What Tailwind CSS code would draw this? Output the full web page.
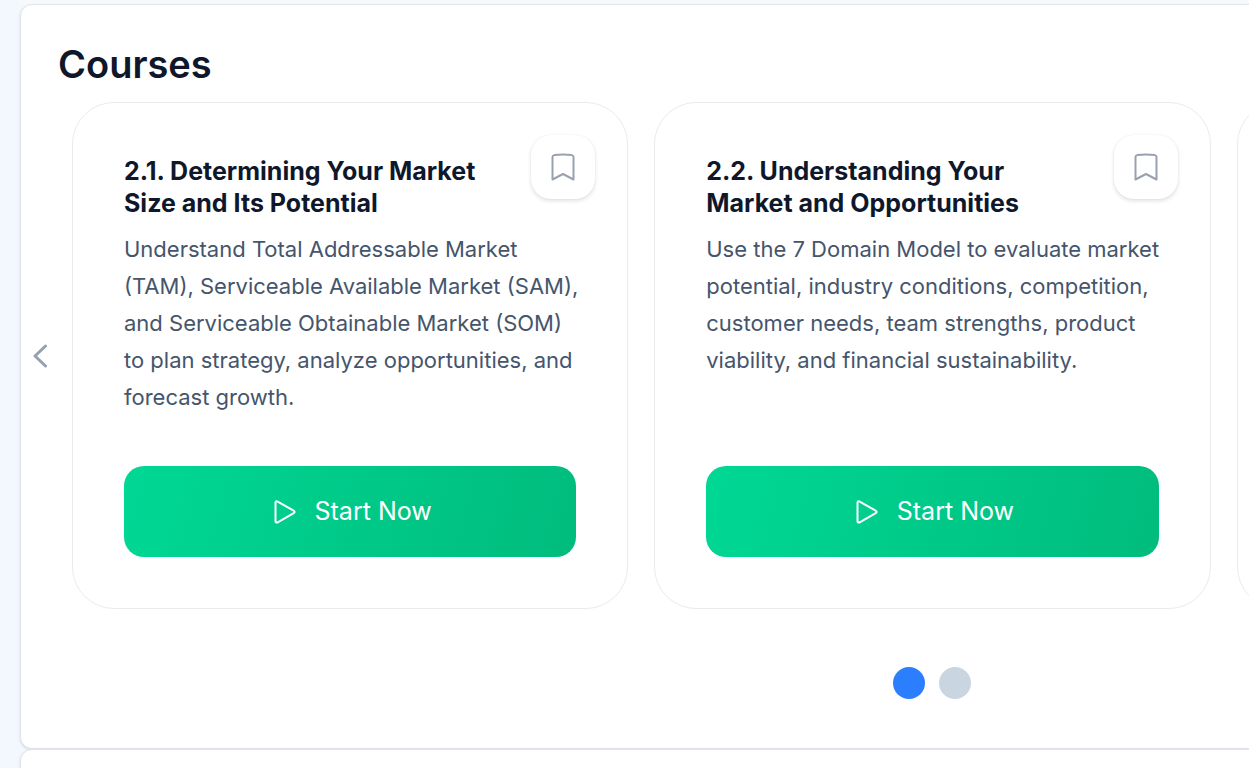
<!DOCTYPE html>
<html lang="en">
<head>
  <meta charset="UTF-8">
  <meta name="viewport" content="width=device-width, initial-scale=1.0">
  <title>Courses</title>
  <script src="https://cdn.jsdelivr.net/npm/@tailwindcss/browser@4"></script>
</head>
<body class="bg-[#f3f8ff] min-h-screen overflow-hidden font-['Inter','Liberation_Sans',sans-serif] text-slate-900">
  <main class="w-[146.1%] ml-5">
    <div class="h-1 bg-[#f8f9fa]"></div>

    <!-- Courses panel -->
    <section class="bg-white border border-[#e3e5ec] rounded-xl shadow-sm pt-[34px] pb-[49px]">
      <h2 class="text-[38px] leading-[50px] font-semibold pl-[37px] mb-[13px]">Courses</h2>

      <div class="flex items-center">
        <button type="button" aria-label="Previous" class="w-[51px] shrink-0 flex pl-3 text-[#94a0b3]">
          <svg class="w-[15px] h-6" viewBox="0 0 15 24" fill="none" stroke="currentColor" stroke-width="3" stroke-linecap="round" stroke-linejoin="round"><path d="M12.500 2 2 12l10.500 10"/></svg>
        </button>

        <div class="grow grid grid-cols-3 gap-[26px]">
          <!-- Card 2.1 -->
          <article class="relative flex flex-col border border-[#ebebed] rounded-[42px] px-[51px] pt-[52px] pb-[51px]">
            <button type="button" aria-label="Bookmark" class="absolute top-8 right-8 w-16 h-16 rounded-[20px] bg-white shadow-[0_2px_4px_rgba(0,0,0,0.12),0_0_2px_rgba(0,0,0,0.06)] flex items-center justify-center text-[#99a1af]">
              <svg class="w-8 h-8" viewBox="0 0 32 32" fill="none" stroke="currentColor" stroke-width="2" stroke-linejoin="round"><path d="M5.500 28.500V6Q5.500 4.500 7.200 4.100Q16 2.900 24.800 4.100Q26.500 4.500 26.500 6V28.500L16 23Z"/></svg>
            </button>
            <h3 class="text-[25px] leading-8 font-bold pr-[72px]">2.1. Determining Your Market Size and Its Potential</h3>
            <p class="mt-3 mb-[50px] text-[22px] leading-[37px] text-slate-600 whitespace-nowrap">Understand Total Addressable Market<br>(TAM), Serviceable Available Market (SAM),<br>and Serviceable Obtainable Market (SOM)<br>to plan strategy, analyze opportunities, and<br>forecast growth.</p>
            <button type="button" class="mt-auto h-[91px] rounded-[20px] bg-linear-105 from-[#00d894] to-[#00bc7d] text-white text-[25px] flex items-center justify-center gap-[18px]">
              <svg class="w-7 h-6" viewBox="-5 0 28 24" fill="none" stroke="currentColor" stroke-width="2" stroke-linejoin="round"><path d="M1.500 3Q1.500 .6 3.700 1.700L19.700 10.700Q21.500 12 19.700 13.200L3.700 22.300Q1.500 23.200 1.500 21Z"/></svg>
              Start Now
            </button>
          </article>

          <!-- Card 2.2 -->
          <article class="relative flex flex-col border border-[#ebebed] rounded-[42px] px-[51px] pt-[52px] pb-[51px]">
            <button type="button" aria-label="Bookmark" class="absolute top-8 right-8 w-16 h-16 rounded-[20px] bg-white shadow-[0_2px_4px_rgba(0,0,0,0.12),0_0_2px_rgba(0,0,0,0.06)] flex items-center justify-center text-[#99a1af]">
              <svg class="w-8 h-8" viewBox="0 0 32 32" fill="none" stroke="currentColor" stroke-width="2" stroke-linejoin="round"><path d="M5.500 28.500V6Q5.500 4.500 7.200 4.100Q16 2.900 24.800 4.100Q26.500 4.500 26.500 6V28.500L16 23Z"/></svg>
            </button>
            <h3 class="text-[25px] leading-8 font-bold pr-[72px]">2.2. Understanding Your Market and Opportunities</h3>
            <p class="mt-3 mb-[50px] text-[22px] leading-[37px] text-slate-600 whitespace-nowrap">Use the 7 Domain Model to evaluate market<br>potential, industry conditions, competition,<br>customer needs, team strengths, product<br>viability, and financial sustainability.</p>
            <button type="button" class="mt-auto h-[91px] rounded-[20px] bg-linear-105 from-[#00d894] to-[#00bc7d] text-white text-[25px] flex items-center justify-center gap-[18px]">
              <svg class="w-7 h-6" viewBox="-5 0 28 24" fill="none" stroke="currentColor" stroke-width="2" stroke-linejoin="round"><path d="M1.500 3Q1.500 .6 3.700 1.700L19.700 10.700Q21.500 12 19.700 13.200L3.700 22.300Q1.500 23.200 1.500 21Z"/></svg>
              Start Now
            </button>
          </article>

          <!-- Next card, mostly out of view -->
          <article class="border border-[#ebebed] rounded-[42px]"></article>
        </div>

        <div class="w-[51px] shrink-0"></div>
      </div>

      <!-- Pagination -->
      <div class="mt-[58px] flex justify-center gap-[14px]">
        <button type="button" aria-label="Page 1" class="w-8 h-8 rounded-full bg-[#2b7fff]"></button>
        <button type="button" aria-label="Page 2" class="w-8 h-8 rounded-full bg-[#cad5e2]"></button>
      </div>
    </section>

    <section class="h-24 bg-white border border-[#e3e5ec] rounded-xl shadow-sm"></section>
  </main>
</body>
</html>
